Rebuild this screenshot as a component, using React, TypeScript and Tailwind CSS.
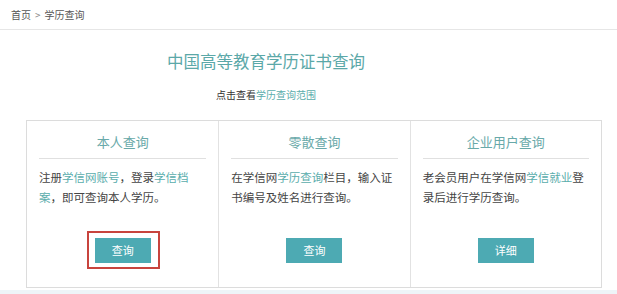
const cards = [
  {
    title: '本人查询',
    body: (
      <>
        注册<a className="text-[#5aadac]">学信网账号</a>，登录<a className="text-[#5aadac]">学信档</a>
        <br />
        <a className="text-[#5aadac]">案</a>，即可查询本人学历。
      </>
    ),
    button: '查询',
    marked: true,
  },
  {
    title: '零散查询',
    body: (
      <>
        在学信网<a className="text-[#5aadac]">学历查询</a>栏目，输入证
        <br />
        书编号及姓名进行查询。
      </>
    ),
    button: '查询',
    marked: false,
  },
  {
    title: '企业用户查询',
    body: (
      <>
        老会员用户在学信网<a className="text-[#5aadac]">学信就业</a>登
        <br />
        录后进行学历查询。
      </>
    ),
    button: '详细',
    marked: false,
  },
];

export default function App() {
  return (
    <div
      className="w-[617px] h-[294px] overflow-hidden bg-[#eef4f8]"
      style={{ fontFamily: '"Noto Sans CJK SC", "Noto Sans", sans-serif' }}
    >
      <div className="bg-white pb-[2px]">
        {/* Breadcrumb */}
        <div className="h-[30px] pl-[11px] flex items-center text-[10px] text-[#555] border-b border-[#e6e6e6]">
          首页 <span className="mx-[4px] text-[#888]">&gt;</span> 学历查询
        </div>

        {/* Heading block sits a little left of the page centre */}
        <div className="w-[532px]">
          <h1 className="mt-[20px] text-center text-[16.5px] leading-[22px] text-[#5ba8a8]">
            中国高等教育学历证书查询
          </h1>
          <p className="mt-[16px] text-center text-[10px] leading-[14px] text-[#333]">
            点击查看<a className="text-[#5aadac]">学历查询范围</a>
          </p>
        </div>

        {/* Cards */}
        <div className="mt-[18px] ml-[26px] w-[576px] grid grid-cols-3 border border-[#dcdcdc]">
          {cards.map((c, i) => (
            <div key={c.title} className={`px-[12px] ${i > 0 ? 'border-l border-[#e2e2e2]' : ''}`}>
              <div className="pt-[11px] pb-[6px] text-center text-[13px] leading-[20px] text-[#68a9a9] border-b border-[#e0e0e0]">
                {c.title}
              </div>
              <p className="mt-[8px] text-[11.5px] leading-[20px] text-[#444] whitespace-nowrap">{c.body}</p>
              <div className="mt-[29px] pb-[24px] flex justify-center">
                <div className="relative">
                  <button className="w-[56px] h-[25px] bg-[#4daab3] text-white text-[11px]">{c.button}</button>
                  {c.marked && (
                    <span className="absolute -left-[8px] -right-[9px] -top-[5px] -bottom-[6px] border-2 border-[#c8443d]"></span>
                  )}
                </div>
              </div>
            </div>
          ))}
        </div>
      </div>
    </div>
  );
}
